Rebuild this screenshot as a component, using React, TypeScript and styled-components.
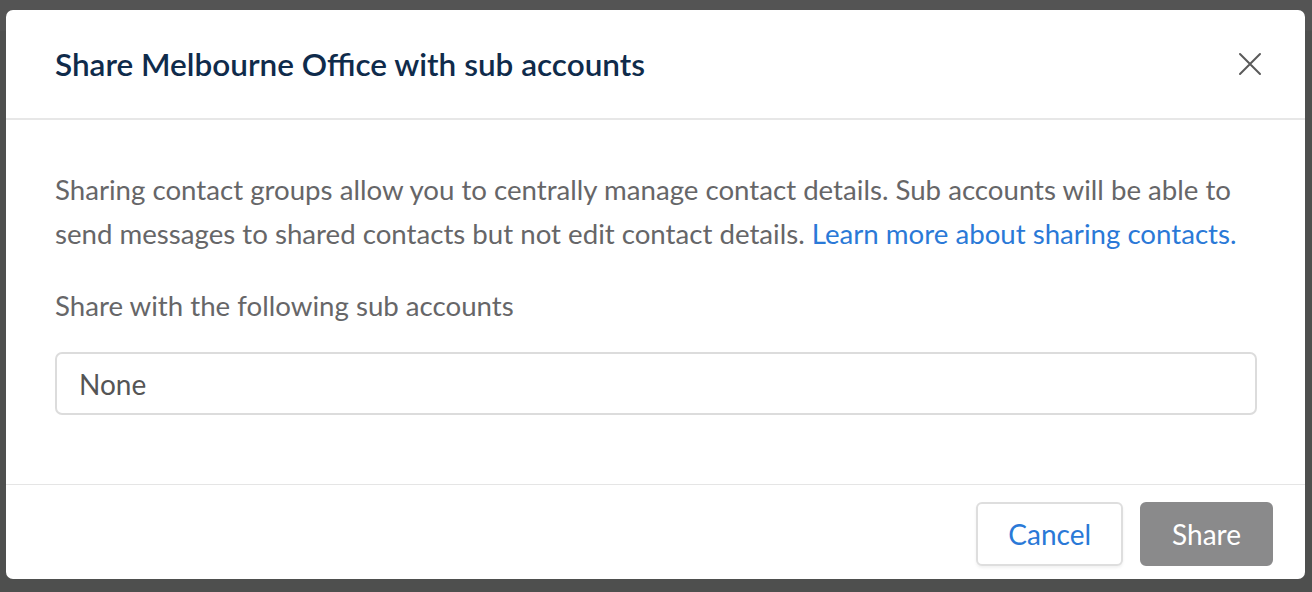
import React, { useState } from "react";
import styled, { createGlobalStyle } from "styled-components";

const GlobalStyle = createGlobalStyle`
  html, body {
    margin: 0;
    padding: 0;
    background: #4f504f;
    font-family: Lato, "Open Sans", sans-serif;
  }
`;

const Backdrop = styled.div`
  min-height: 592px;
  box-sizing: border-box;
  padding: 10px 7px 0 6px;
  background: linear-gradient(#545454 0, #545454 30px, #4e4f4e 31px);
`;

const Modal = styled.div`
  background: #fff;
  border-radius: 7px;
  overflow: hidden;
  display: flex;
  flex-direction: column;
`;

const Header = styled.div`
  height: 108px;
  display: flex;
  align-items: center;
  justify-content: space-between;
  padding: 0 41px 0 49px;
  border-bottom: 2px solid #e7e7e7;
`;

const Title = styled.h2`
  margin: 0;
  font-size: 31.5px;
  font-weight: 600;
  color: #0f2b4b;
`;

const CloseButton = styled.button`
  background: transparent;
  border: 0;
  padding: 0;
  width: 28px;
  height: 28px;
  display: flex;
  align-items: center;
  justify-content: center;
  cursor: pointer;
`;

const Body = styled.div`
  padding: 48px 48px 69px 49px;
  color: #666668;
  font-size: 27.65px;
  line-height: 44px;
`;

const Description = styled.p`
  margin: 0 0 28px;
`;

const Link = styled.a`
  color: #2a79d7;
  text-decoration: none;
`;

const FieldLabel = styled.label`
  display: block;
  margin-bottom: 24px;
`;

const SelectBox = styled.input`
  display: block;
  width: 100%;
  box-sizing: border-box;
  height: 63px;
  border: 2px solid #dcdcdc;
  border-radius: 7px;
  padding: 0 22px;
  font-family: inherit;
  font-size: 28px;
  color: #555;
  background: #fff;
  outline: none;
`;

const Footer = styled.div`
  display: flex;
  justify-content: flex-end;
  gap: 17px;
  padding: 17px 32px 13px;
  border-top: 1px solid #e5e5e5;
`;

const Button = styled.button<{ $primary?: boolean }>`
  height: 64px;
  padding: 0 30px;
  border-radius: 6px;
  font-family: inherit;
  font-size: 28px;
  cursor: pointer;
  border: 2px solid ${(p) => (p.$primary ? "#8a8a8b" : "#dedede")};
  background: ${(p) => (p.$primary ? "#8a8a8b" : "#fff")};
  color: ${(p) => (p.$primary ? "#fff" : "#2a79d7")};
  box-shadow: ${(p) => (p.$primary ? "none" : "0 2px 3px rgba(0,0,0,0.06)")};
`;

const App: React.FC = () => {
  const [value, setValue] = useState<string>("None");

  return (
    <>
      <GlobalStyle />
      <Backdrop>
        <Modal>
          <Header>
            <Title>Share Melbourne Office with sub accounts</Title>
            <CloseButton aria-label="Close">
              <svg width="24" height="24" viewBox="0 0 24 24">
                <path
                  d="M2 2L22 22M22 2L2 22"
                  stroke="#5a5a5a"
                  strokeWidth="2"
                  strokeLinecap="round"
                />
              </svg>
            </CloseButton>
          </Header>
          <Body>
            <Description>
              Sharing contact groups allow you to centrally manage contact
              details. Sub accounts will be able to send messages to shared
              contacts but not edit contact details.{" "}
              <Link href="#">Learn more about sharing contacts.</Link>
            </Description>
            <FieldLabel>Share with the following sub accounts</FieldLabel>
            <SelectBox
              value={value}
              onChange={(e: React.ChangeEvent<HTMLInputElement>) =>
                setValue(e.target.value)
              }
            />
          </Body>
          <Footer>
            <Button>Cancel</Button>
            <Button $primary>Share</Button>
          </Footer>
        </Modal>
      </Backdrop>
    </>
  );
};

export default App;
